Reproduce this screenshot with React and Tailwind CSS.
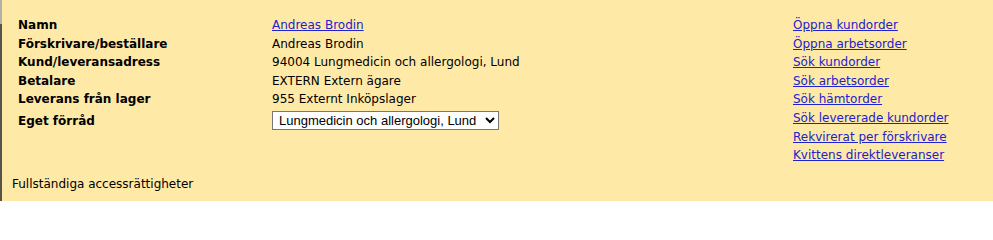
import React from 'react';

const rows = [
  { label: 'Namn', value: 'Andreas Brodin', link: true },
  { label: 'Förskrivare/beställare', value: 'Andreas Brodin' },
  { label: 'Kund/leveransadress', value: '94004 Lungmedicin och allergologi, Lund' },
  { label: 'Betalare', value: 'EXTERN Extern ägare' },
  { label: 'Leverans från lager', value: '955 Externt Inköpslager' },
];

const links = [
  'Öppna kundorder',
  'Öppna arbetsorder',
  'Sök kundorder',
  'Sök arbetsorder',
  'Sök hämtorder',
  'Sök levererade kundorder',
  'Rekvirerat per förskrivare',
  'Kvittens direktleveranser',
];

const App = () => {
  return (
    <div className="w-[993px] h-[201px] bg-[#ffe9a7] text-black text-[12px] font-['DejaVu_Sans',Verdana,sans-serif] flex overflow-hidden">
      {/* window edge */}
      <div className="w-[2px] flex flex-col">
        <div className="h-[24px] bg-[#b4b0a6]" />
        <div className="flex-1 bg-[#57524a]" />
      </div>
      <div className="flex flex-col flex-1">
        <div className="flex pt-[16px]">
          <div className="flex flex-col w-[270px] pl-[16px]">
            {rows.map((r) => (
              <div key={r.label} className="h-[18.5px] leading-[18.5px] font-bold">{r.label}</div>
            ))}
            <div className="h-[24px] leading-[24px] font-bold">Eget förråd</div>
          </div>
          <div className="flex flex-col w-[520px]">
            {rows.map((r) => (
              <div key={r.label} className="h-[18.5px] leading-[18.5px]">
                {r.link ? (
                  <a href="#" className="text-[#2222cc] underline">{r.value}</a>
                ) : (
                  r.value
                )}
              </div>
            ))}
            <div className="h-[24px] flex items-center">
              <select className="h-[19px] w-[227px] border border-[#767676] bg-white text-[13px] font-['Liberation_Sans',Arial,sans-serif] pl-[2px] pr-[4px]">
                <option>Lungmedicin och allergologi, Lund</option>
              </select>
            </div>
          </div>
          <div className="flex flex-col pl-[1px]">
            {links.map((l) => (
              <a key={l} href="#" className="h-[18.6px] leading-[18.6px] text-[#2222cc] underline">{l}</a>
            ))}
          </div>
        </div>
        <div className="mt-auto pl-[10px] pb-[10px] leading-[14px]">Fullständiga accessrättigheter</div>
      </div>
    </div>
  );
};

export default App;
